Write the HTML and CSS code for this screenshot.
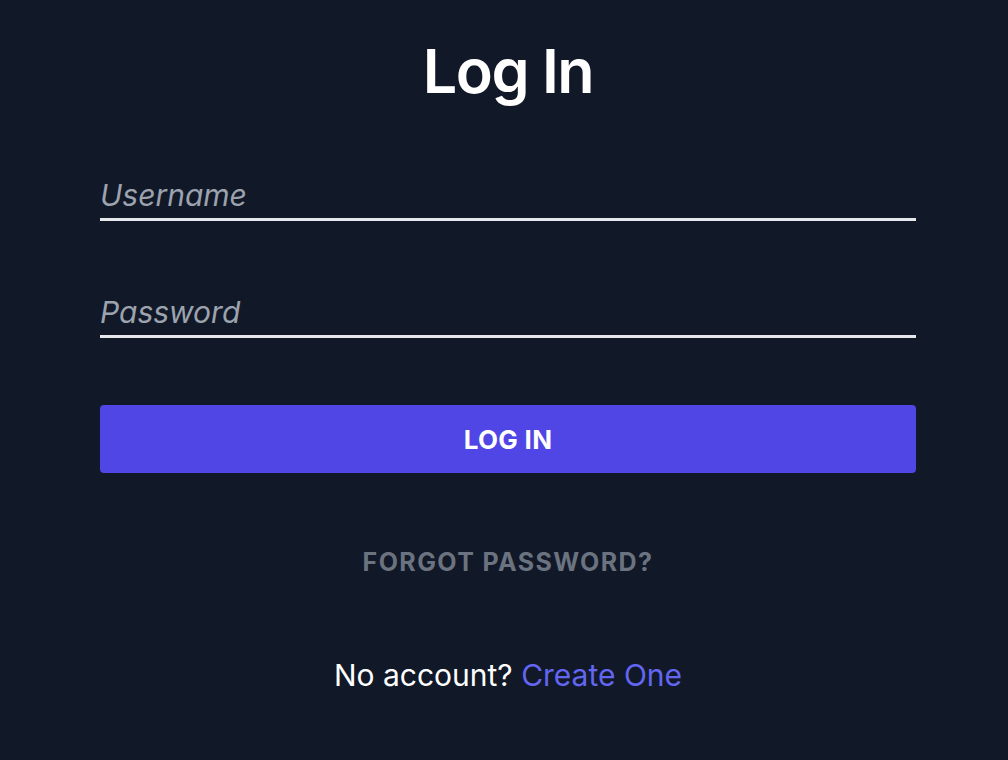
FILE: index.html
```html
<!DOCTYPE html>
<html lang="en">

<head>
  <meta charset="UTF-8">
  <meta name="viewport" content="width=device-width, initial-scale=1.0">
  <title>Log In</title>
  <link rel="stylesheet" href="styles.css">
</head>

<body>
  <main class="login">
    <h1 class="login-title">Log In</h1>

    <form class="login-form" onsubmit="return false">
      <input class="login-input" type="text" placeholder="Username">
      <input class="login-input" type="password" placeholder="Password">
      <button class="login-btn" type="submit">Log In</button>
    </form>

    <a class="forgot-link" href="#">Forgot Password?</a>

    <p class="signup">No account? <a href="#">Create One</a></p>
  </main>
</body>

</html>
```

FILE: styles.css
```css
body {
  margin: 0;
  padding-left: 8px;
  background-color: #111827;
  color: #ffffff;
  font-family: Inter, 'Noto Sans', sans-serif;
}

.login {
  width: 816px;
  margin: 0 auto;
  padding-top: 38px;
  display: flex;
  flex-direction: column;
  align-items: center;
}

.login-title {
  margin: 0;
  font-size: 61px;
  font-weight: 600;
  line-height: 66px;
  letter-spacing: -1.5px;
}

.login-form {
  width: 100%;
  display: flex;
  flex-direction: column;
  margin-top: 68px;
}

.login-input {
  background: transparent;
  border: none;
  border-bottom: 3px solid #e5e7eb;
  color: #ffffff;
  font-family: inherit;
  font-size: 30px;
  font-style: italic;
  padding: 0;
  height: 46px;
  outline: none;
  margin-bottom: 68px;
}

.login-input::placeholder {
  color: #9ca3af;
}

.login-btn {
  margin-top: -1px;
  height: 68px;
  border: none;
  border-radius: 4px;
  background-color: #4f46e5;
  color: #ffffff;
  font-family: inherit;
  font-size: 26px;
  font-weight: 700;
  letter-spacing: 0.3px;
  text-transform: uppercase;
  cursor: pointer;
}

.forgot-link {
  margin-top: 74px;
  color: #6b7280;
  font-size: 25px;
  font-weight: 700;
  letter-spacing: 1.4px;
  text-transform: uppercase;
  text-decoration: none;
}

.signup {
  margin: 80px 0 0;
  font-size: 30px;
}

.signup a {
  color: #6366f1;
  text-decoration: none;
}
```
